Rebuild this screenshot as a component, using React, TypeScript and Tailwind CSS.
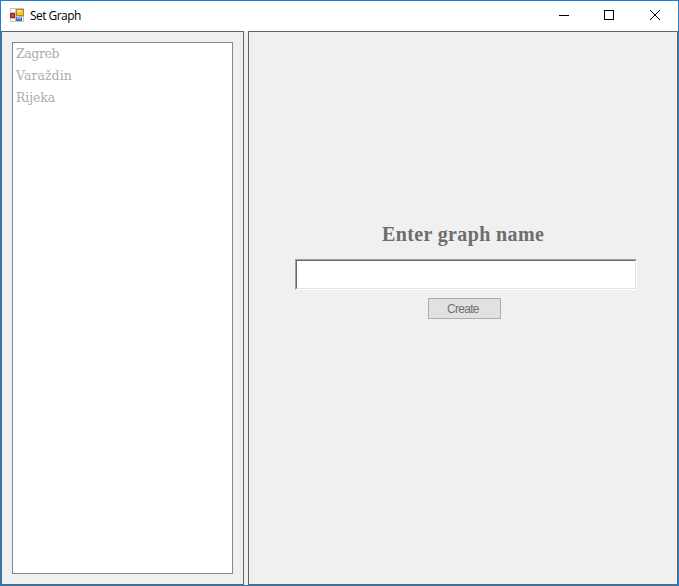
const cities = [
  { name: 'Zagreb', tracking: 'tracking-[-0.4px]' },
  { name: 'Varaždin', tracking: 'tracking-[0.05px]' },
  { name: 'Rijeka', tracking: 'tracking-[-0.1px]' },
];

function FormIcon() {
  return (
    <svg width="14" height="14" viewBox="0 0 14 14" shapeRendering="crispEdges">
      <rect width="14" height="14" fill="#c3c3c3" />
      <path d="M1 1h4v3H1zM1 11h4v2H1zM12 9h1v4h-1z" fill="#fff" />
      <rect x="6" y="1" width="8" height="7" fill="#b88412" />
      <rect x="7" y="2" width="6" height="5" fill="#f4c53a" />
      <rect x="7" y="2" width="4" height="2" fill="#ffe58d" />
      <rect x="0" y="5" width="5" height="5" fill="#a91e18" />
      <rect x="1" y="6" width="3" height="3" fill="#c9443a" />
      <rect x="6" y="9" width="6" height="4" fill="#3e74d1" />
      <rect x="7" y="9" width="4" height="2" fill="#8db6f5" />
    </svg>
  );
}

function TitleBar() {
  return (
    <header className="flex h-[30px] shrink-0 items-start bg-white">
      <div className="pt-[7px] pl-[9px]"><FormIcon /></div>
      <h1 className="ml-[6px] pt-[6px] font-['Open_Sans',sans-serif] text-[12px] leading-[18px] tracking-[-0.55px] whitespace-nowrap text-black">Set Graph</h1>
      <svg width="138" height="30" className="ml-auto" fill="none" stroke="#000">
        <path d="M19 14.5h10" shapeRendering="crispEdges" />
        <rect x="64.5" y="9.5" width="9" height="9" shapeRendering="crispEdges" />
        <path d="M110 9l10 10M120 9l-10 10" />
      </svg>
    </header>
  );
}

export default function App() {
  return (
    <div className="flex h-[586px] w-[679px] flex-col border border-[#1b80d2] bg-[#f0f0f0]">
      <TitleBar />
      <main className="flex min-h-0 flex-1 gap-1">
        <aside className="w-[243px] border border-[#646464] px-[10px] py-[10px]">
          <ul className="h-[532px] w-[221px] border border-[#828790] bg-white pl-[3px] font-['DejaVu_Serif',serif] text-[12.5px] leading-[22px] text-[#acacac]">
            {cities.map((city) => (
              <li key={city.name} className={`h-[22px] ${city.tracking}`}>{city.name}</li>
            ))}
          </ul>
        </aside>
        <section className="flex flex-1 flex-col border border-[#646464] pt-[189px] pl-[46px]">
          <h2 className="h-[38px] pl-[87px] font-['Liberation_Serif',serif] text-[20px] leading-[26px] font-bold tracking-[0.37px] whitespace-nowrap text-[#6d6d6d]">Enter graph name</h2>
          <div className="h-[31px] w-[342px] border border-t-[#a0a0a0] border-r-white border-b-white border-l-[#a0a0a0]">
            <input aria-label="Graph name" className="block h-full w-full border border-t-[#696969] border-r-[#e3e3e3] border-b-[#e3e3e3] border-l-[#696969] bg-white px-1 outline-none" />
          </div>
          <button className="mt-2 ml-[133px] flex h-[21px] w-[73px] items-center border border-[#adadad] bg-[#e1e1e1] pl-[18px] font-['Liberation_Sans',sans-serif] text-[12px] leading-[18px] tracking-[-0.7px] text-[#707070]">Create</button>
        </section>
      </main>
    </div>
  );
}
